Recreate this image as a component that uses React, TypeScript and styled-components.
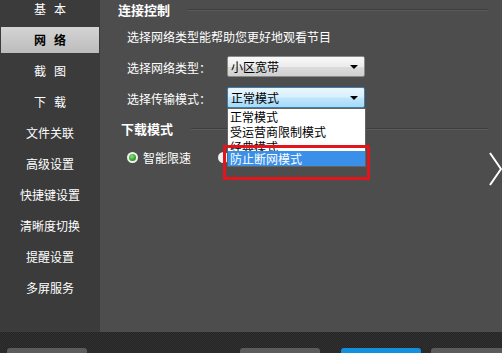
import styled, { createGlobalStyle } from 'styled-components';

const GlobalStyle = createGlobalStyle`
  html, body {
    margin: 0;
    padding: 0;
    background: #4d4d4d;
    overflow: hidden;
  }
  body {
    font-family: 'Noto Sans CJK SC', 'Noto Sans', sans-serif;
    font-size: 12px;
    color: #fff;
  }
`;

const navItems = ['基本', '网络', '截图', '下载', '文件关联', '高级设置', '快捷键设置', '清晰度切换', '提醒设置', '多屏服务'];

const Window = styled.div`
  width: 502px;
  height: 353px;
  display: grid;
  grid-template-columns: 100px 1fr;
  grid-template-rows: 332px 21px;
  position: relative;
  overflow: hidden;
`;

const Sidebar = styled.nav`
  background: #3b3b3b;
  display: flex;
  flex-direction: column;
  gap: 5px;
  padding: 0 1px;
  overflow: hidden;
`;

const NavItem = styled.div<{ $active?: boolean; $short?: boolean }>`
  height: 26px;
  flex-shrink: 0;
  display: flex;
  align-items: center;
  justify-content: center;
  line-height: 1;
  letter-spacing: ${(p) => (p.$short ? '8px' : '0')};
  text-indent: ${(p) => (p.$short ? '8px' : '0')};
  font-weight: ${(p) => (p.$active ? 700 : 400)};
  color: ${(p) => (p.$active ? '#000' : '#fff')};
  background: ${(p) => (p.$active ? 'linear-gradient(#d4d4d4, #bcbcbc)' : 'transparent')};
  &:first-child {
    margin-top: -4px;
  }
`;

const Main = styled.main`
  background: #4d4d4d;
  padding: 1px 14px 0 18px;
  display: flex;
  flex-direction: column;
`;

const SectionHead = styled.div<{ $indent?: number; $top?: number }>`
  height: 16px;
  display: flex;
  align-items: center;
  gap: 18px;
  margin-left: ${(p) => p.$indent ?? 0}px;
  margin-top: ${(p) => p.$top ?? 0}px;
  font-size: 13px;
  font-weight: 700;
  white-space: nowrap;
`;

const Rule = styled.div`
  flex: 1;
  height: 1px;
  background: #3e3e3e;
  box-shadow: 0 1px 0 #5a5a5a;
`;

const Desc = styled.div`
  height: 18px;
  line-height: 18px;
  margin: 11px 0 0 9px;
`;

const Field = styled.div`
  display: flex;
  align-items: center;
  margin: 9px 0 0 9px;
  height: 22px;
`;

const Label = styled.span`
  width: 100px;
  padding-top: 3px;
`;

const SelectWrap = styled.div`
  position: relative;
`;

const Select = styled.div<{ $focused?: boolean }>`
  width: 138px;
  height: 21px;
  box-sizing: border-box;
  display: flex;
  align-items: center;
  justify-content: space-between;
  padding: 1px 6px 0 3px;
  border-radius: 2px;
  color: #000;
  border: 1px solid ${(p) => (p.$focused ? '#3c7fb1' : '#8a8a8a')};
  background: ${(p) =>
    p.$focused ? 'linear-gradient(#eaf6fd 0%, #d9f0fc 45%, #bee6fd 55%, #a7d9f5 100%)' : 'linear-gradient(#fafafa 0%, #ececec 50%, #dcdcdc 51%, #d0d0d0 100%)'};
`;

const Arrow = styled.span`
  width: 0;
  height: 0;
  border-left: 4px solid transparent;
  border-right: 4px solid transparent;
  border-top: 4px solid #000;
`;

const List = styled.div`
  position: absolute;
  left: 0;
  top: 21px;
  width: 139px;
  box-sizing: border-box;
  background: #fff;
  border: 1px solid #646464;
  color: #000;
  z-index: 2;
`;

const Option = styled.div<{ $selected?: boolean; $overlap?: number }>`
  height: 15px;
  line-height: 15px;
  padding-left: 2px;
  margin-top: ${(p) => -(p.$overlap ?? 0)}px;
  position: relative;
  color: ${(p) => (p.$selected ? '#fff' : '#000')};
  background: ${(p) => (p.$selected ? '#3a8fe8' : 'transparent')};
`;

const Marker = styled.div`
  position: absolute;
  left: 223px;
  top: 145px;
  width: 147px;
  height: 35px;
  box-sizing: border-box;
  border: 3px solid #e4141c;
  z-index: 3;
`;

const RadioRow = styled.div`
  display: flex;
  align-items: center;
  margin: 13px 0 0 9px;
  height: 16px;
  gap: 27px;
`;

const RadioLabel = styled.label`
  display: flex;
  align-items: center;
  gap: 5px;
`;

const Radio = styled.span<{ $on?: boolean }>`
  width: 11px;
  height: 11px;
  border-radius: 50%;
  box-sizing: border-box;
  border: 2px solid #f2f2f2;
  background: ${(p) => (p.$on ? 'radial-gradient(circle at 40% 35%, #8fe07a, #1e9a1e 70%)' : '#f2f2f2')};
`;

const Chevron = styled.svg`
  position: absolute;
  right: 0;
  top: 152px;
`;

const BottomBar = styled.footer`
  grid-column: 1 / 3;
  background-color: #2a2a2a;
  background-image: repeating-conic-gradient(#262626 0% 25%, #303030 0% 50%);
  background-size: 2px 2px;
  display: flex;
  align-items: flex-start;
  padding: 16px 0 0 7px;
`;

const Button = styled.div<{ $primary?: boolean; $gap?: number }>`
  width: 80px;
  height: 12px;
  flex-shrink: 0;
  margin-left: ${(p) => p.$gap ?? 0}px;
  border-radius: 3px 3px 0 0;
  background: ${(p) => (p.$primary ? '#1590dc' : '#5c5c5c')};
`;

export default function App() {
  return (
    <>
      <GlobalStyle />
      <Window>
        <Sidebar>
          {navItems.map((item) => (
            <NavItem key={item} $active={item === '网络'} $short={item.length === 2}>
              {item}
            </NavItem>
          ))}
        </Sidebar>
        <Main>
          <SectionHead>
            连接控制
            <Rule />
          </SectionHead>
          <Desc>选择网络类型能帮助您更好地观看节目</Desc>
          <Field>
            <Label>选择网络类型：</Label>
            <Select>
              小区宽带
              <Arrow />
            </Select>
          </Field>
          <Field>
            <Label>选择传输模式：</Label>
            <SelectWrap>
              <Select $focused>
                正常模式
                <Arrow />
              </Select>
              <List>
                <Option>正常模式</Option>
                <Option>受运营商限制模式</Option>
                <Option>经典模式</Option>
                <Option $selected $overlap={3}>
                  防止断网模式
                </Option>
              </List>
            </SelectWrap>
          </Field>
          <SectionHead $indent={3} $top={12}>
            下载模式
            <Rule />
          </SectionHead>
          <RadioRow>
            <RadioLabel>
              <Radio $on />
              智能限速
            </RadioLabel>
            <RadioLabel>
              <Radio />
            </RadioLabel>
          </RadioRow>
        </Main>
        <BottomBar>
          <Button />
          <Button $gap={153} />
          <Button $primary $gap={21} />
          <Button $gap={10} />
        </BottomBar>
        <Marker />
        <Chevron width="13" height="34" viewBox="0 0 13 34">
          <polyline points="1,1 12,17 1,33" fill="none" stroke="#fff" strokeWidth="2" />
        </Chevron>
      </Window>
    </>
  );
}
